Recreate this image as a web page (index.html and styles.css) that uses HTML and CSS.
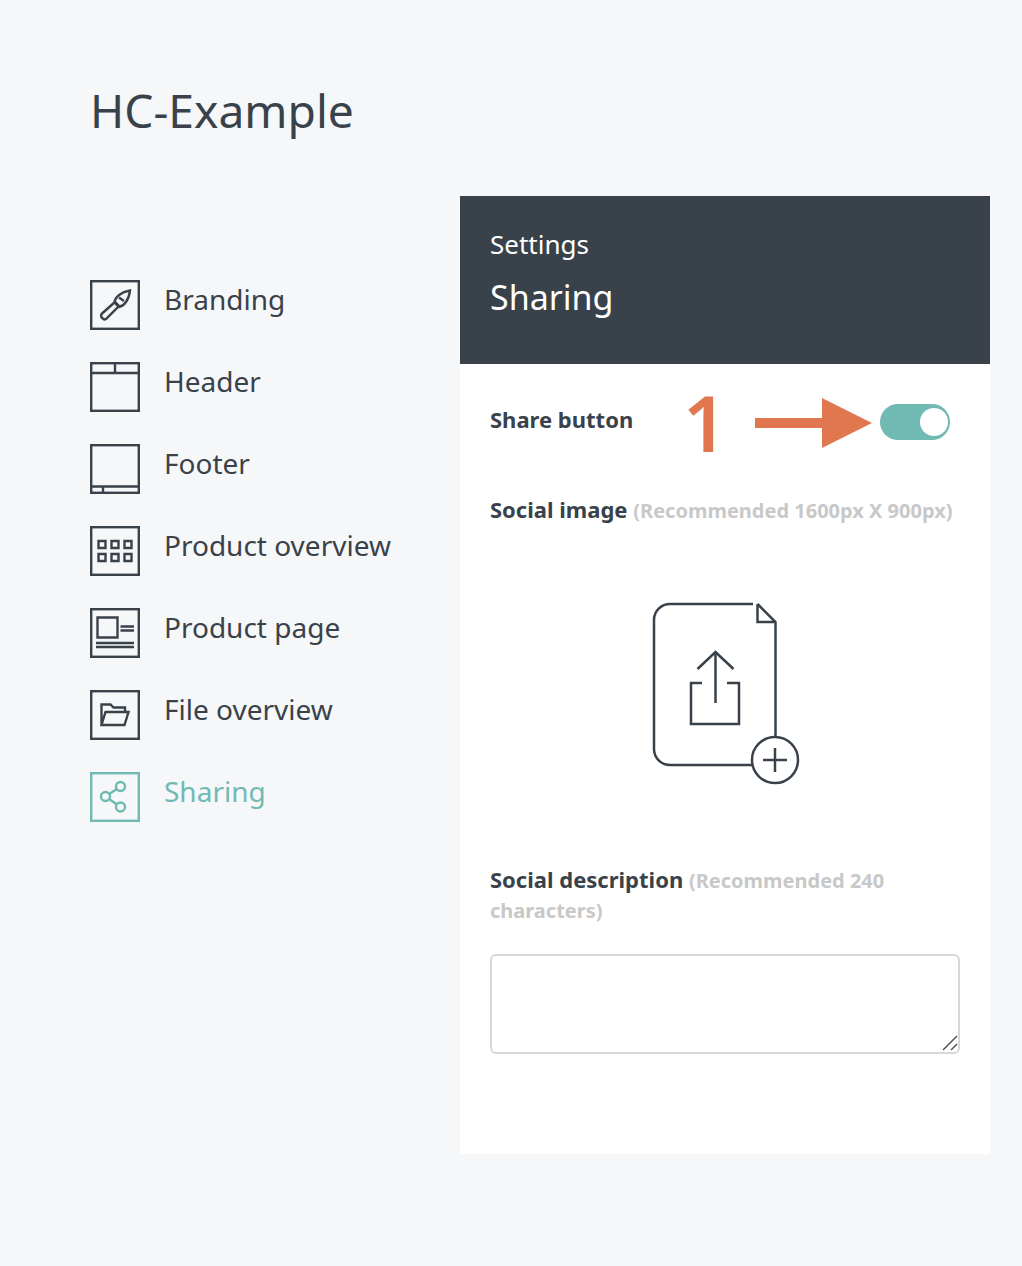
FILE: index.html
```html
<!DOCTYPE html>
<html lang="en">
<head>
    <meta charset="UTF-8">
    <meta name="viewport" content="width=device-width, initial-scale=1.0">
    <title>HC-Example</title>
    <link rel="stylesheet" href="styles.css">
</head>
<body>
    <h1 class="page-title">HC-Example</h1>
    <div class="layout">
        <nav class="side-nav">
            <a href="#" class="nav-item">
                <svg class="nav-icon" viewBox="0 0 50 50">
                    <rect x="1.200" y="1.200" width="47.600" height="47.600"/>
                    <path d="M11.500 34 25 22 29 26 16 39C13.500 40.500 10 37 11.500 34Z"/>
                    <path d="M24.500 22.500C25 17 31 12 40 10.500 39 20 34 26 29 27ZM29 17.500 34 21"/>
                </svg>
                <span>Branding</span>
            </a>
            <a href="#" class="nav-item">
                <svg class="nav-icon" viewBox="0 0 50 50">
                    <rect x="1.200" y="1.200" width="47.600" height="47.600"/>
                    <path d="M1 11H49M25 1V11"/>
                </svg>
                <span>Header</span>
            </a>
            <a href="#" class="nav-item">
                <svg class="nav-icon" viewBox="0 0 50 50">
                    <rect x="1.200" y="1.200" width="47.600" height="47.600"/>
                    <path d="M1 42.500H49M13 42.500V49"/>
                </svg>
                <span>Footer</span>
            </a>
            <a href="#" class="nav-item">
                <svg class="nav-icon" viewBox="0 0 50 50">
                    <rect x="1.200" y="1.200" width="47.600" height="47.600"/>
                    <path d="M8.500 15h7v7h-7zM21.500 15h7v7h-7zM34.500 15h7v7h-7zM8.500 28h7v7h-7zM21.500 28h7v7h-7zM34.500 28h7v7h-7z"/>
                </svg>
                <span>Product overview</span>
            </a>
            <a href="#" class="nav-item">
                <svg class="nav-icon" viewBox="0 0 50 50">
                    <rect x="1.200" y="1.200" width="47.600" height="47.600"/>
                    <path d="M7.500 9.500h20v20h-20zM30.500 18.500H44M30.500 22.500H44M6 35H44M6 39H44"/>
                </svg>
                <span>Product page</span>
            </a>
            <a href="#" class="nav-item">
                <svg class="nav-icon" viewBox="0 0 50 50">
                    <rect x="1.200" y="1.200" width="47.600" height="47.600"/>
                    <path d="M11.500 35V14.500H20.500L23.500 17.500H35V22M11.500 35H34.500L38.500 22H15.500Z"/>
                </svg>
                <span>File overview</span>
            </a>
            <a href="#" class="nav-item nav-item-active">
                <svg class="nav-icon" viewBox="0 0 50 50">
                    <rect x="1.200" y="1.200" width="47.600" height="47.600"/>
                    <circle cx="30.500" cy="14.500" r="4.500"/>
                    <circle cx="15.500" cy="24.500" r="4.500"/>
                    <circle cx="30.500" cy="35" r="4.500"/>
                    <path d="M19.300 22 26.700 17M19.300 27.200 26.700 32.300"/>
                </svg>
                <span>Sharing</span>
            </a>
        </nav>

        <main class="panel">
            <header class="panel-header">
                <div class="panel-kicker">Settings</div>
                <h2 class="panel-title">Sharing</h2>
            </header>
            <div class="panel-body">
                <div class="share-row">
                    <span class="field-label">Share button</span>
                    <span class="toggle"><span class="toggle-knob"></span></span>
                    <span class="callout-number">1</span>
                    <svg class="callout-arrow" viewBox="0 0 117 50">
                        <path d="M0 20H67V0L117 25 67 50V30H0Z"/>
                    </svg>
                </div>
                <p class="field-label image-label">Social image <span class="field-hint">(Recommended 1600px X 900px)</span></p>
                <div class="upload">
                    <svg class="upload-icon" viewBox="0 0 150 185">
                        <path d="M103 4H20A16 16 0 0 0 4 20V149A16 16 0 0 0 20 165H102M125.500 137V22L107.500 4M107.500 4V22H125.500"/>
                        <path d="M65.500 103V52M47.500 69 65.500 52 83.500 69M52 83H41V124H89V83H77"/>
                        <circle cx="125" cy="160" r="23"/>
                        <path d="M113 160H137M125 148V172"/>
                    </svg>
                </div>
                <p class="field-label description-label">Social description <span class="field-hint">(Recommended 240 characters)</span></p>
                <div class="description-field">
                    <textarea class="description-input"></textarea>
                    <svg class="resize-grip" viewBox="0 0 16 16">
                        <path d="M1 15 15 1M9 15 15 9"/>
                    </svg>
                </div>
            </div>
        </main>
    </div>
</body>
</html>
```

FILE: styles.css
```css
body {
    font-family: "Noto Sans", "Open Sans", sans-serif;
    margin: 0;
    height: 1266px;
    overflow: hidden;
    background-color: #f6f7f9;
    color: #39424a;
}

.page-title {
    margin: 0;
    padding: 80px 0 0 90px;
    font-size: 46.2px;
    line-height: 62px;
    font-weight: 400;
}

.layout {
    display: flex;
    margin-top: 54px;
    padding-left: 90px;
}

.side-nav {
    display: flex;
    flex-direction: column;
    gap: 32px;
    width: 370px;
    padding-top: 84px;
}

.nav-item {
    display: flex;
    align-items: center;
    gap: 24px;
    height: 50px;
    font-size: 28px;
    color: #39424a;
    text-decoration: none;
}

.nav-item span {
    position: relative;
    top: -6px;
}

.nav-icon {
    width: 50px;
    height: 50px;
    fill: none;
    stroke: #39424a;
    stroke-width: 2.4;
}

.nav-item-active {
    color: #70bab3;
}

.nav-item-active .nav-icon {
    stroke: #70bab3;
}

.panel {
    width: 530px;
    height: 958px;
    background-color: #fff;
}

.panel-header {
    box-sizing: border-box;
    height: 168px;
    padding: 31px 30px 0;
    background-color: #39424a;
    color: #fff;
}

.panel-kicker {
    font-size: 26px;
    line-height: 34px;
}

.panel-title {
    margin: 13px 0 0;
    font-size: 34px;
    line-height: 46px;
    font-weight: 400;
}

.panel-body {
    padding: 0 30px;
}

.share-row {
    position: relative;
    display: flex;
    justify-content: space-between;
    align-items: center;
    height: 36px;
    padding: 40px 10px 0 0;
}

.field-label {
    font-size: 22px;
    line-height: 30px;
    font-weight: 700;
}

.share-row .field-label {
    position: relative;
    top: -3px;
}

.field-hint {
    font-size: 20px;
    line-height: 1;
    color: #c8c8c8;
}

.toggle {
    display: flex;
    justify-content: flex-end;
    align-items: center;
    box-sizing: border-box;
    width: 70px;
    height: 36px;
    padding-right: 2px;
    border-radius: 18px;
    background-color: #70bab3;
}

.toggle-knob {
    width: 28px;
    height: 28px;
    border-radius: 50%;
    background-color: #fff;
}

.callout-number {
    position: absolute;
    left: 193px;
    top: 14px;
    font-size: 77px;
    line-height: 90px;
    font-weight: 600;
    color: #e0774f;
}

.callout-arrow {
    position: absolute;
    left: 265px;
    top: 34px;
    width: 117px;
    height: 50px;
    fill: #e0774f;
}

.image-label {
    margin: 54px 0 0;
}

.upload {
    display: flex;
    justify-content: center;
    padding: 76px 0 0 0;
}

.upload-icon {
    width: 150px;
    height: 185px;
    fill: none;
    stroke: #39424a;
    stroke-width: 2.500;
}

.description-label {
    margin: 79px 0 0;
}

.description-field {
    position: relative;
    margin-top: 30px;
}

.description-input {
    display: block;
    box-sizing: border-box;
    width: 470px;
    height: 100px;
    border: 2px solid #d8d8d8;
    border-radius: 6px;
    background-color: #fff;
    resize: none;
}

.resize-grip {
    position: absolute;
    right: 2px;
    bottom: 3px;
    width: 16px;
    height: 16px;
    fill: none;
    stroke: #555;
    stroke-width: 1.500;
}
```
